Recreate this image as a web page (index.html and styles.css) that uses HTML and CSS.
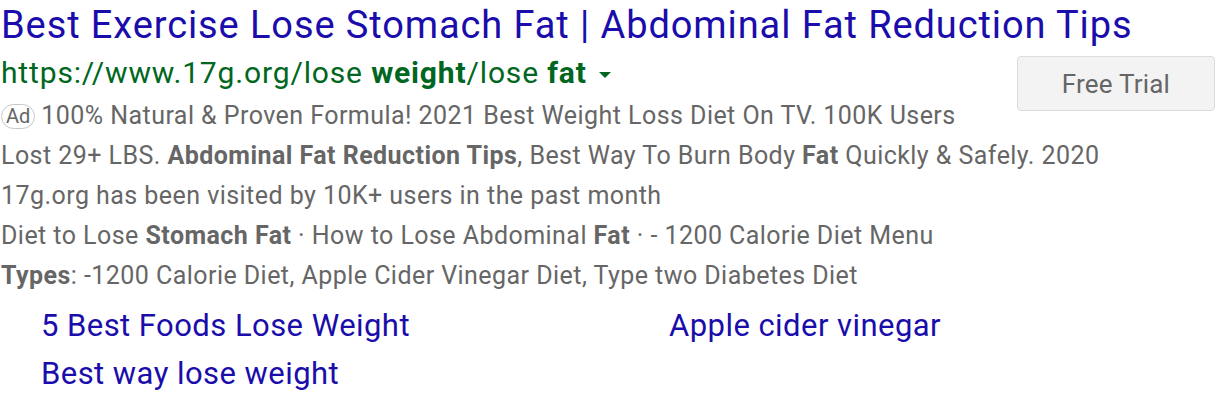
FILE: index.html
```html
<!DOCTYPE html>
<html>
<head>
<meta charset="utf-8">
<link rel="stylesheet" href="styles.css">
</head>
<body>
<div class="ad">
  <a class="title" href="#">Best Exercise Lose Stomach Fat | Abdominal Fat Reduction Tips</a>
  <div class="row">
    <div class="main">
      <div class="url">https://www.17g.org/lose <b>weight</b>/lose <b>fat</b><span class="caret"></span></div>
      <div class="line"><span class="badge">Ad</span>100% Natural &amp; Proven Formula! 2021 Best Weight Loss Diet On TV. 100K Users</div>
      <div class="line">Lost 29+ LBS. <b>Abdominal Fat Reduction Tips</b>, Best Way To Burn Body <b>Fat</b> Quickly &amp; Safely. 2020</div>
      <div class="line">17g.org has been visited by 10K+ users in the past month</div>
      <div class="line">Diet to Lose <b>Stomach Fat</b> · How to Lose Abdominal <b>Fat</b> · - 1200 Calorie Diet Menu</div>
      <div class="line"><b>Types</b>: -1200 Calorie Diet, Apple Cider Vinegar Diet, Type two Diabetes Diet</div>
    </div>
    <button class="cta">Free Trial</button>
  </div>
  <div class="sitelinks">
    <a href="#">5 Best Foods Lose Weight</a>
    <a href="#">Apple cider vinegar</a>
    <a href="#">Best way lose weight</a>
  </div>
</div>
</body>
</html>
```
FILE: styles.css
```css
html, body {
  margin: 0;
  padding: 0;
  background: #fff;
}
body {
  font-family: Roboto, "Liberation Sans", Arial, sans-serif;
}
.ad {
  width: 1216px;
  padding-left: 1px;
  box-sizing: border-box;
}
.title {
  display: block;
  color: #1a0dab;
  text-decoration: none;
  font-size: 38px;
  letter-spacing: 0.9px;
  line-height: 50px;
  white-space: nowrap;
}
.row {
  display: flex;
  justify-content: space-between;
  align-items: flex-start;
}
.main {
  flex: 1 1 auto;
  min-width: 0;
  display: flex;
  flex-direction: column;
}
.url {
  color: #006621;
  font-size: 30px;
  letter-spacing: 0.85px;
  line-height: 46px;
  white-space: nowrap;
}
.url b {
  font-weight: 700;
}
.caret {
  display: inline-block;
  width: 0;
  height: 0;
  border-left: 6px solid transparent;
  border-right: 6px solid transparent;
  border-top: 6px solid #006621;
  margin-left: 12px;
  vertical-align: middle;
}
.line {
  color: #666;
  font-size: 25px;
  letter-spacing: 0.45px;
  line-height: 40px;
  white-space: nowrap;
}
.line b {
  font-weight: 700;
}
.badge {
  display: inline-block;
  border: 1px solid #c8c8c8;
  border-radius: 13px;
  font-size: 20px;
  letter-spacing: 0;
  line-height: 23px;
  padding: 0 4px;
  margin-right: 6px;
  vertical-align: 1px;
}
.cta {
  flex: 0 0 198px;
  margin-top: 6px;
  margin-right: 1px;
  width: 198px;
  height: 55px;
  background: #f3f3f3;
  border: 1px solid #dcdcdc;
  border-radius: 4px;
  color: #666;
  font-family: Roboto, "Liberation Sans", Arial, sans-serif;
  font-size: 26px;
  letter-spacing: 0.2px;
  padding: 0;
}
.sitelinks {
  display: grid;
  grid-template-columns: 628px 1fr;
  padding-left: 40px;
  padding-top: 6px;
}
.sitelinks a {
  color: #1a0dab;
  text-decoration: none;
  font-size: 31px;
  letter-spacing: 0.45px;
  line-height: 48px;
}
```
